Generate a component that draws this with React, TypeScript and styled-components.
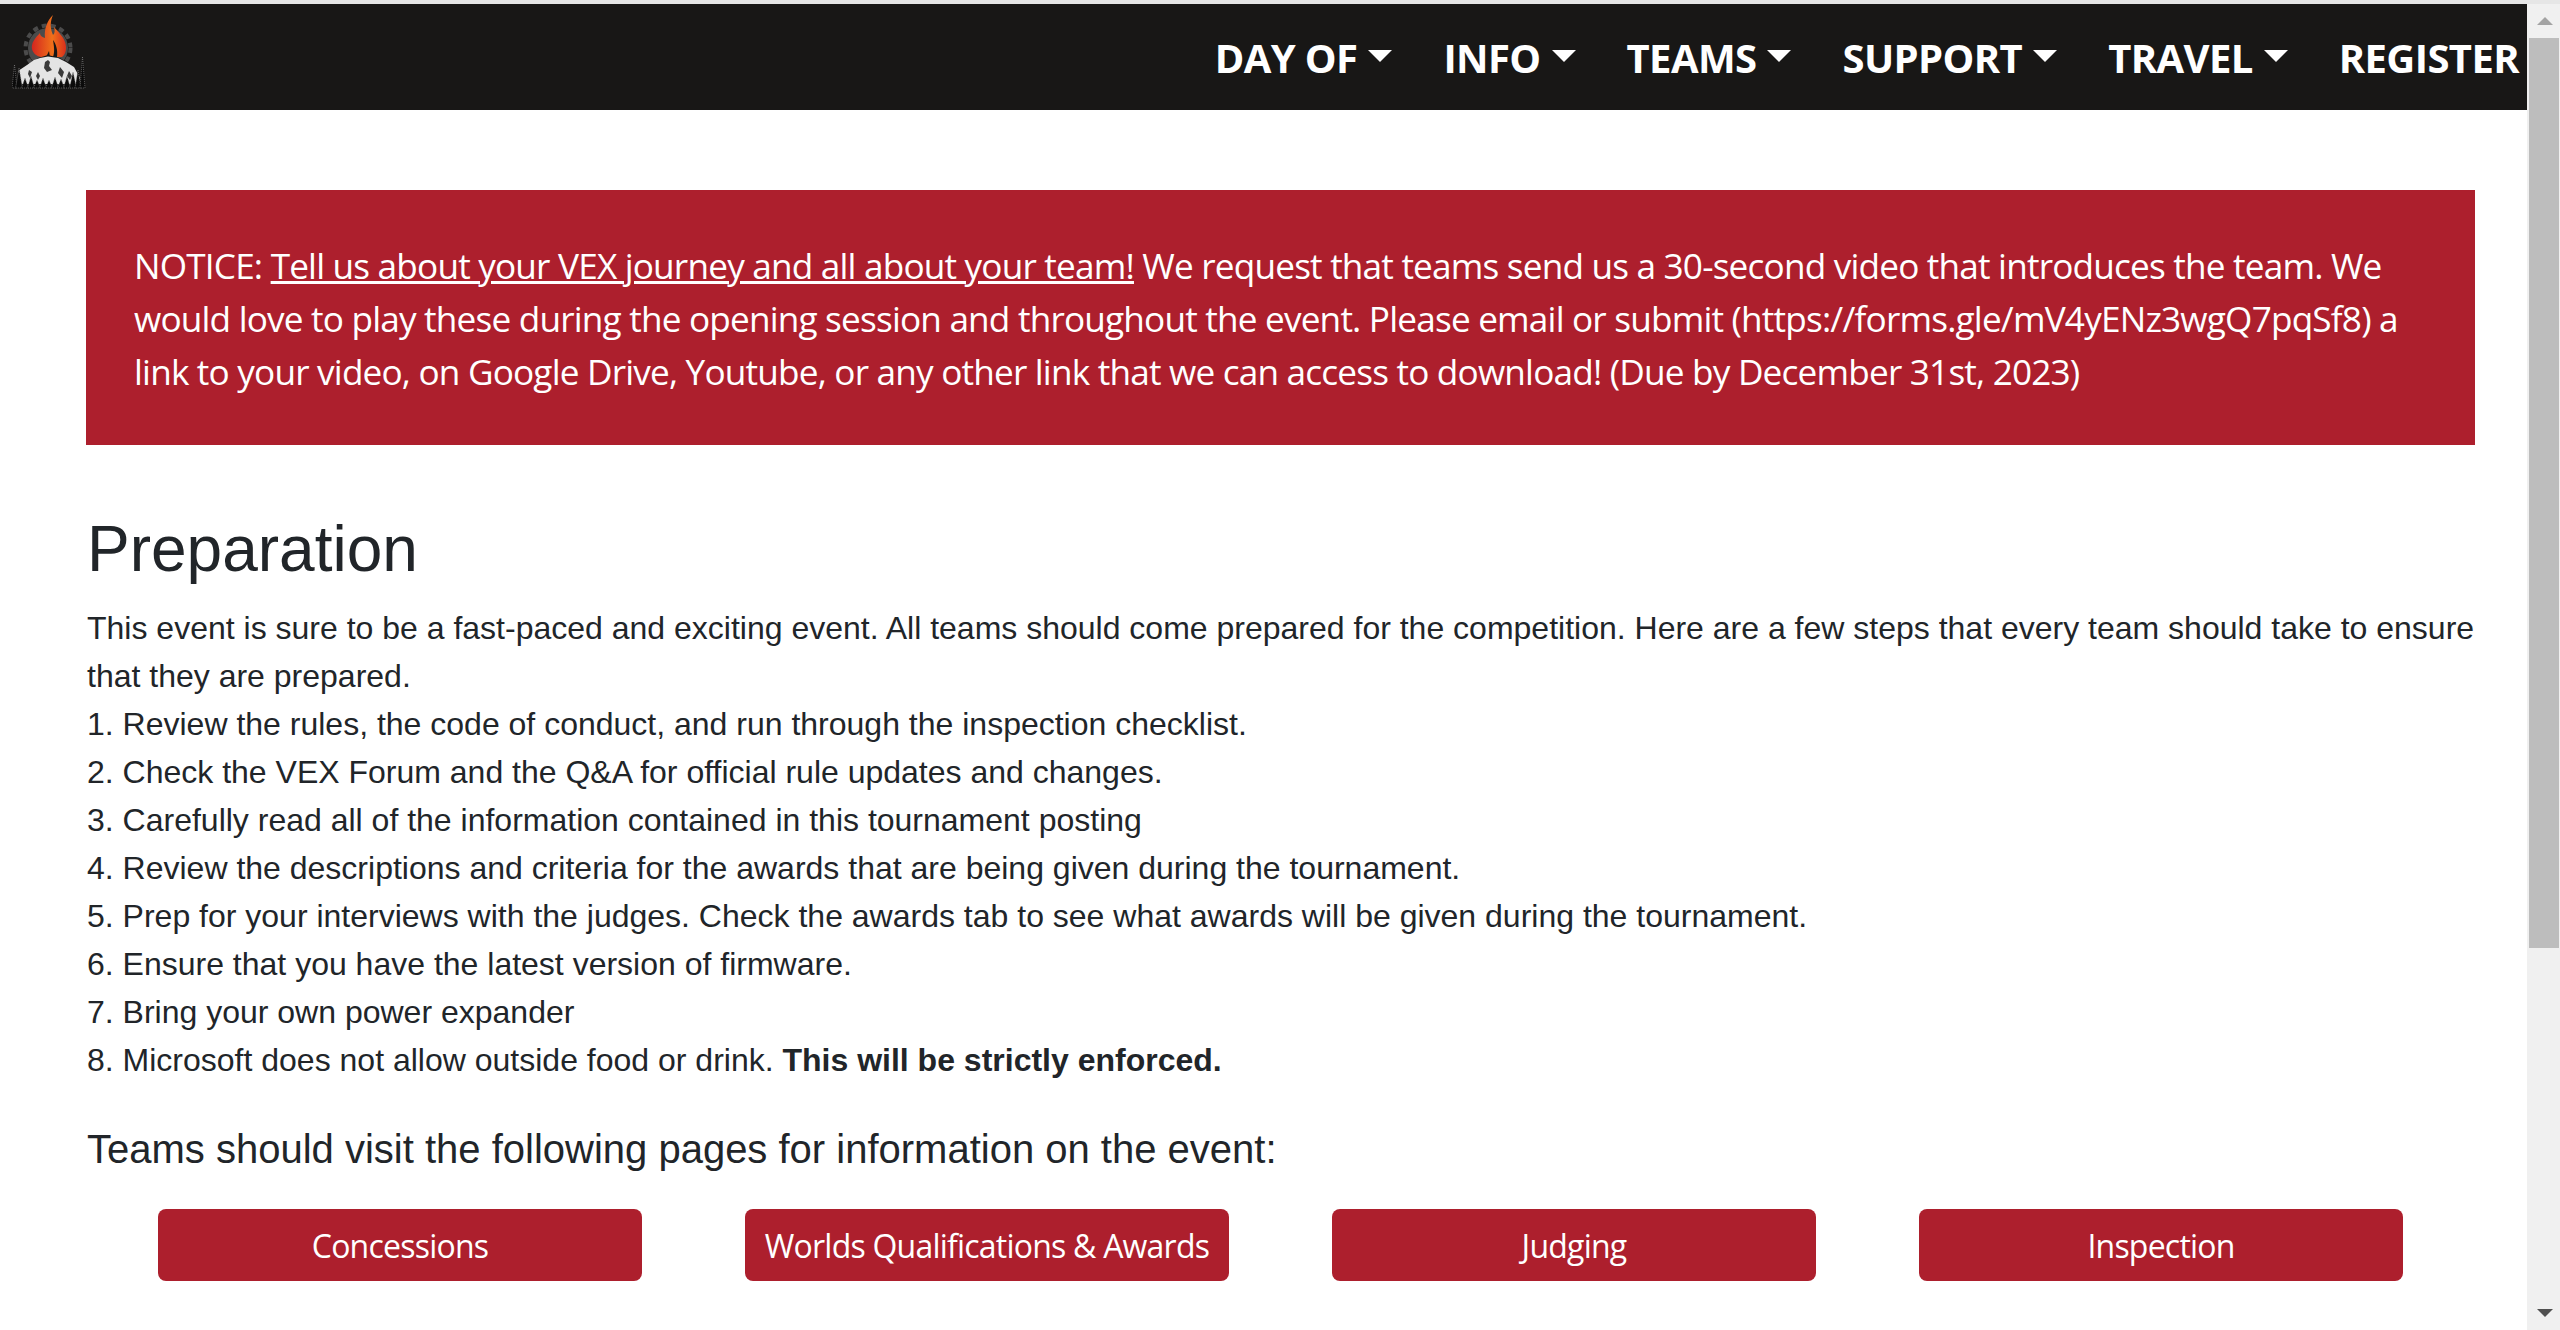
import styled, { createGlobalStyle } from "styled-components";

const GlobalStyle = createGlobalStyle`
  html, body {
    margin: 0;
    padding: 0;
    height: 1330px;
    overflow: hidden;
    background: #fff;
  }
`;

const Window = styled.div`
  width: 2560px;
  height: 1330px;
  display: flex;
  flex-direction: column;
  overflow: hidden;
`;

const TopEdge = styled.div`
  height: 4px;
  flex: none;
  background: #e6e6e6;
`;

const Body = styled.div`
  flex: 1;
  min-height: 0;
  display: flex;
`;

const Page = styled.div`
  flex: 1;
  min-width: 0;
  overflow: hidden;
  font-family: "Liberation Sans", Arial, sans-serif;
  font-size: 32px;
  line-height: 48px;
  color: #212529;
`;

const Navbar = styled.nav`
  height: 106px;
  background: #181716;
  display: flex;
  align-items: center;
  justify-content: space-between;
  padding: 0 8px 0 12px;
`;

const Logo = styled.svg`
  width: 74px;
  height: 74px;
  margin-top: -10px;
  display: block;
`;

const Menu = styled.div`
  display: flex;
  align-items: center;
  gap: 51px;
  padding-top: 2px;
  font-family: "Open Sans", sans-serif;
  font-weight: 700;
  font-size: 40px;
  letter-spacing: -0.6px;
  color: #fff;
`;

const MenuItem = styled.a`
  display: flex;
  align-items: center;
  gap: 11px;
  white-space: nowrap;
`;

const Caret = styled.span`
  width: 0;
  height: 0;
  margin-top: -5px;
  border-left: 12px solid transparent;
  border-right: 12px solid transparent;
  border-top: 12px solid #fff;
`;

const Content = styled.main`
  padding: 80px 52px 0 86px;
`;

const Notice = styled.div`
  background: #ad1f2d;
  color: #fff;
  padding: 49px 48px 47px;
  font-family: "Open Sans", sans-serif;
  font-size: 35.2px;
  line-height: 53px;
  letter-spacing: -0.82px;

  a {
    color: #fff;
    text-decoration: underline;
  }
`;

const Heading = styled.h2`
  margin: 66px 0 17px;
  padding-left: 1px;
  font-size: 64px;
  line-height: 76px;
  font-weight: 400;
`;

const Subheading = styled.h5`
  margin: 41px 0 36px;
  padding-left: 1px;
  font-size: 40px;
  line-height: 48px;
  font-weight: 400;
`;

const ButtonRow = styled.div`
  display: grid;
  grid-template-columns: repeat(4, 1fr);
  gap: 103px;
  padding: 0 72px;
`;

const LinkButton = styled.a`
  height: 72px;
  padding-top: 2px;
  box-sizing: border-box;
  display: flex;
  align-items: center;
  justify-content: center;
  background: #ad1f2d;
  border-radius: 8px;
  color: #fff;
  font-family: "Open Sans", sans-serif;
  font-size: 32px;
  letter-spacing: -0.78px;
  white-space: nowrap;
`;

const Scrollbar = styled.div`
  width: 33px;
  flex: none;
  background: #f0f0f0;
  display: flex;
  flex-direction: column;
  align-items: flex-end;
`;

const ScrollArrow = styled.button<{ $down?: boolean }>`
  width: 31px;
  height: 34px;
  flex: none;
  margin: 0 0 0 auto;
  padding: 0;
  border: none;
  background: none;
  display: flex;
  align-items: center;
  justify-content: center;

  &::after {
    content: "";
    width: 0;
    height: 0;
    border-left: 8px solid transparent;
    border-right: 8px solid transparent;
    ${(p) =>
      p.$down
        ? "border-top: 8px solid #505050;"
        : "border-bottom: 8px solid #a3a3a3;"}
  }
`;

const ScrollThumb = styled.div`
  width: 30px;
  height: 910px;
  margin-right: 1px;
  background: #bdbdbd;
  flex: none;
`;

const ScrollTrack = styled.div`
  flex: 1;
`;

const StepList = styled.div`
  display: flex;
  flex-direction: column;
  padding-left: 1px;
`;

const steps = [
  "1. Review the rules, the code of conduct, and run through the inspection checklist.",
  "2. Check the VEX Forum and the Q&A for official rule updates and changes.",
  "3. Carefully read all of the information contained in this tournament posting",
  "4. Review the descriptions and criteria for the awards that are being given during the tournament.",
  "5. Prep for your interviews with the judges. Check the awards tab to see what awards will be given during the tournament.",
  "6. Ensure that you have the latest version of firmware.",
  "7. Bring your own power expander",
];

const menu = [
  { label: "DAY OF", drop: true },
  { label: "INFO", drop: true },
  { label: "TEAMS", drop: true },
  { label: "SUPPORT", drop: true },
  { label: "TRAVEL", drop: true },
  { label: "REGISTER", drop: false },
];

const pages = ["Concessions", "Worlds Qualifications & Awards", "Judging", "Inspection"];

// x, top y and half width of each tree along the bottom of the logo
const trees = [
  [14.5, 65, 2.5],
  [19, 68, 3.5],
  [25, 78, 3.5],
  [31, 76, 3.5],
  [37, 80, 3.5],
  [43, 78, 3.5],
  [49, 80, 3.5],
  [55, 77, 3.5],
  [61, 79, 3.5],
  [67, 76, 3.5],
  [73, 72, 3.5],
  [78, 70, 3],
  [82.5, 57, 2.5],
];

function FlameLogo() {
  return (
    <Logo viewBox="12 15 74 74">
      <defs>
        <linearGradient id="flame" x1="0" y1="0" x2="1" y2="0">
          <stop offset="0" stopColor="#d3261f" />
          <stop offset="0.6" stopColor="#f0701a" />
          <stop offset="1" stopColor="#d92f1c" />
        </linearGradient>
      </defs>
      {/* gear behind the flame */}
      <circle cx="48" cy="48" r="20" fill="#4b4b4b" />
      <circle cx="48" cy="48" r="22.5" fill="none" stroke="#4b4b4b" strokeWidth="4" strokeDasharray="5 4" />
      <path
        fill="url(#flame)"
        d="M53 15C47 21 44 29 45 38C42 37 40 36 40 33C35 38 31 43 32 49C33 53 36 56 41 57L62 57C66 54 67 48 65 42C63 36 58 32 54 27C55 31 55 33 53 35C50 28 50 22 53 15Z"
      />
      <path fill="#181716" d="M53 40C56 44 58 50 57 57L53 57C55 52 54 46 53 40ZM49 51L50 57L46 57Z" />
      <path fill="#181716" d="M22 70L38 58L48 55L60 58L76 68L76 72L22 72Z" />
      <path
        fill="#e4e4e4"
        d="M18 71L27 65L34 60L40 58L48 56.5L58 58L66 62L74 67L80 78L78 84L20 84Z"
      />
      <path
        fill="#3a3a3a"
        d="M45 62L48 60L50 62L49 66L52 70L47 72L44 68ZM29 70L32 72L30 78L28 74ZM60 67L64 72L62 78L58 73ZM38 72L40 76L38 80L36 76ZM69 71L72 76L70 80L67 76Z"
      />
      {trees.map(([x, y, w]) => (
        <path
          key={x}
          fill="#0b0b0b"
          stroke="#909090"
          strokeWidth="0.6"
          strokeDasharray="1 1"
          d={`M${x} ${y}L${x + w} 88L${x - w} 88Z`}
        />
      ))}
    </Logo>
  );
}

export default function App() {
  return (
    <Window>
      <GlobalStyle />
      <TopEdge />
      <Body>
        <Page>
          <Navbar>
            <FlameLogo />
            <Menu>
              {menu.map((item) => (
                <MenuItem key={item.label}>
                  {item.label}
                  {item.drop && <Caret />}
                </MenuItem>
              ))}
            </Menu>
          </Navbar>
          <Content>
            <Notice>
              NOTICE: <a>Tell us about your VEX journey and all about your team!</a> We request that
              teams send us a 30-second video that introduces the team. We would love to play these
              during the opening session and throughout the event. Please email or submit
              (https://forms.gle/mV4yENz3wgQ7pqSf8) a link to your video, on Google Drive, Youtube,
              or any other link that we can access to download! (Due by December 31st, 2023)
            </Notice>
            <Heading>Preparation</Heading>
            <StepList>
              <span>
                This event is sure to be a fast-paced and exciting event. All teams should come
                prepared for the competition. Here are a few steps that every team should take to
                ensure that they are prepared.
              </span>
              {steps.map((step) => (
                <span key={step}>{step}</span>
              ))}
              <span>
                8. Microsoft does not allow outside food or drink.{" "}
                <strong>This will be strictly enforced.</strong>
              </span>
            </StepList>
            <Subheading>Teams should visit the following pages for information on the event:</Subheading>
            <ButtonRow>
              {pages.map((label) => (
                <LinkButton key={label}>{label}</LinkButton>
              ))}
            </ButtonRow>
          </Content>
        </Page>
        <Scrollbar>
          <ScrollArrow />
          <ScrollThumb />
          <ScrollTrack />
          <ScrollArrow $down />
        </Scrollbar>
      </Body>
    </Window>
  );
}
